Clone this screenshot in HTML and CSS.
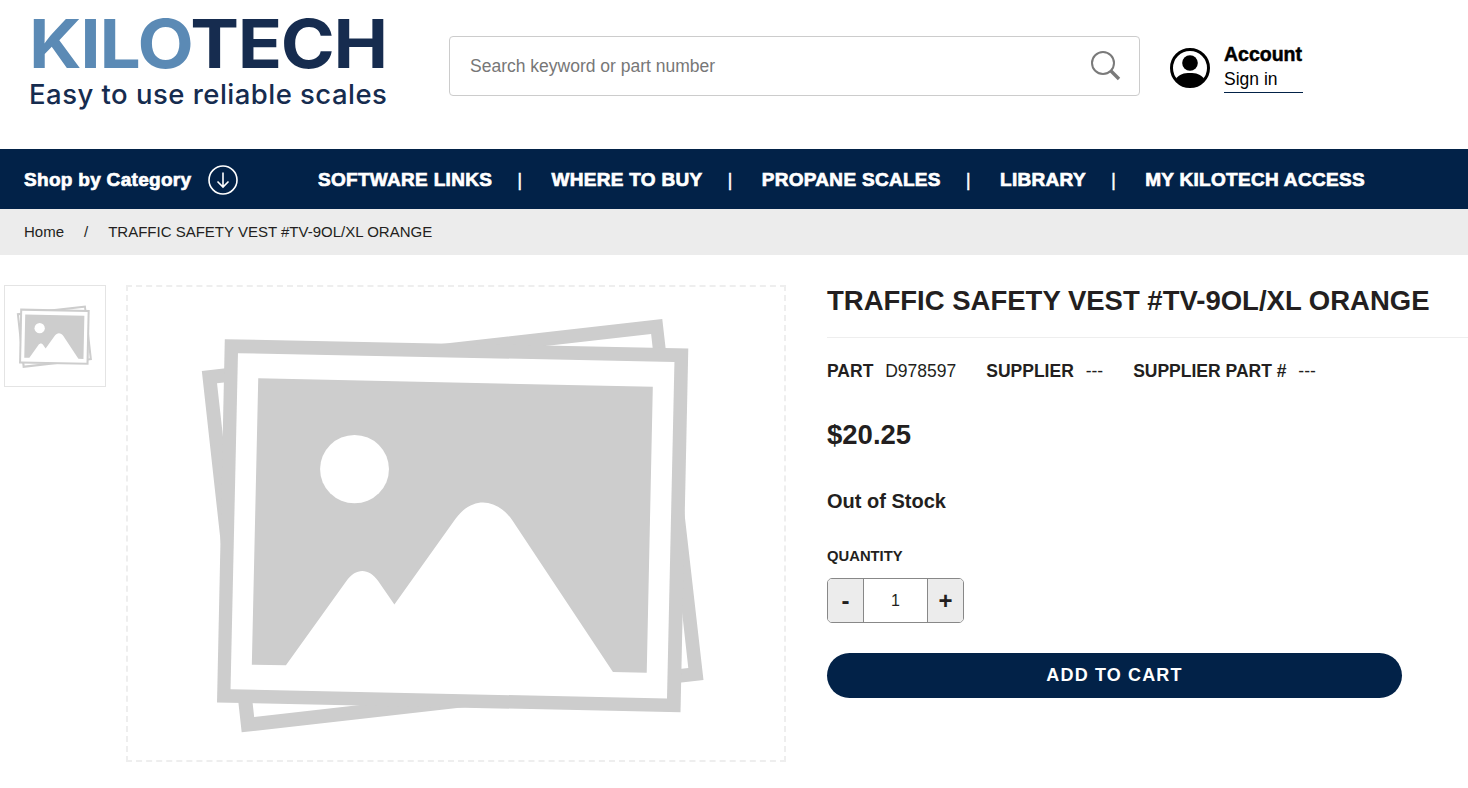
FILE: index.html
```html
<!DOCTYPE html>
<html lang="en">
<head>
    <meta charset="UTF-8">
    <meta name="viewport" content="width=device-width, initial-scale=1.0">
    <title>TRAFFIC SAFETY VEST #TV-9OL/XL ORANGE</title>
    <link rel="stylesheet" href="styles.css">
</head>
<body>

<!-- placeholder picture, used by thumbnail and main image -->
<svg class="defs" width="0" height="0" aria-hidden="true">
    <symbol id="noImage" viewBox="0 0 1560 1266" preserveAspectRatio="none">
        <path fill-rule="evenodd" fill="#cdcdcd" d="M35 185L1398 30L1520 1108L153 1264ZM80 222L190 1218L1475 1072L1365 75Z"/>
        <path fill="#cdcdcd" d="M103 90L1475 118L1452 1204L80 1175Z"/>
        <path fill="#fff" d="M142 132L1434 158L1412 1163L120 1135Z"/>
        <path fill="#cdcdcd" d="M202 207L1370 232L1352 1086L1252 1084L955 632C905 560 832 560 785 628L605 882L557 812C530 772 490 772 463 812L284 1064L183 1062Z"/>
        <circle fill="#fff" cx="487" cy="478" r="102"/>
    </symbol>
</svg>

<header class="site-header">
    <a class="logo" href="#">
        <span class="logo-name"><span class="logo-light">KILO</span>TECH</span>
        <span class="logo-tag">Easy to use reliable scales</span>
    </a>
    <form class="search">
        <input class="search-input" type="text" placeholder="Search keyword or part number">
        <svg class="search-icon" width="32" height="32" viewBox="0 0 32 32">
            <circle cx="14" cy="13" r="11" fill="none" stroke="#7a7a7a" stroke-width="2"/>
            <path d="M22 21L30 29" stroke="#7a7a7a" stroke-width="3.4"/>
        </svg>
    </form>
    <div class="account">
        <svg class="account-icon" width="40" height="40" viewBox="0 0 40 40">
            <circle cx="20" cy="20" r="18.5" fill="#fff" stroke="#000" stroke-width="3"/>
            <circle cx="20" cy="15" r="7.8"/>
            <path d="M6 31C9 26 14 25 20 25S31 26 34 31C30 36 25 38.500 20 38.500S10 36 6 31Z"/>
        </svg>
        <div class="account-text">
            <strong>Account</strong>
            <a href="#">Sign in</a>
        </div>
    </div>
</header>

<nav class="main-nav">
    <a class="shop-link" href="#">
        Shop by Category
        <svg width="30" height="30" viewBox="0 0 30 30">
            <circle cx="15" cy="15" r="14" fill="none" stroke="#fff" stroke-width="1.600"/>
            <path d="M15 7.500V22M9.500 16.500L15 22L20.500 16.500" fill="none" stroke="#fff" stroke-width="1.600"/>
        </svg>
    </a>
    <ul class="nav-links">
        <li><a href="#">SOFTWARE LINKS</a></li>
        <li class="sep">|</li>
        <li><a href="#">WHERE TO BUY</a></li>
        <li class="sep">|</li>
        <li><a href="#">PROPANE SCALES</a></li>
        <li class="sep">|</li>
        <li><a href="#">LIBRARY</a></li>
        <li class="sep">|</li>
        <li><a href="#">MY KILOTECH ACCESS</a></li>
    </ul>
</nav>

<div class="breadcrumb">
    <a href="#">Home</a>
    <span>/</span>
    <span>TRAFFIC SAFETY VEST #TV-9OL/XL ORANGE</span>
</div>

<main class="product">
    <div class="thumb">
        <svg width="79" height="64"><use href="#noImage"/></svg>
    </div>
    <div class="gallery">
        <svg width="527" height="424"><use href="#noImage"/></svg>
    </div>
    <section class="details">
        <h1 class="title">TRAFFIC SAFETY VEST #TV-9OL/XL ORANGE</h1>
        <div class="meta">
            <div><b>PART</b> D978597</div>
            <div><b>SUPPLIER</b> ---</div>
            <div><b>SUPPLIER PART #</b> ---</div>
        </div>
        <div class="price">$20.25</div>
        <div class="stock">Out of Stock</div>
        <label class="qty-label" for="qty">QUANTITY</label>
        <div class="qty">
            <button class="qty-btn" type="button">-</button>
            <input class="qty-input" id="qty" type="text" value="1">
            <button class="qty-btn" type="button">+</button>
        </div>
        <button class="add-cart" type="button">ADD TO CART</button>
    </section>
</main>

</body>
</html>
```

FILE: styles.css
```css
/* general */
body {
    margin: 0;
    font-family: "Liberation Sans", Arial, sans-serif;
    color: #231f20;
    background: #fff;
}

a {
    color: inherit;
    text-decoration: none;
}

.defs {
    display: block;
    height: 0;
}

/* header */
.site-header {
    display: flex;
    align-items: flex-start;
    height: 149px;
    box-sizing: border-box;
    padding: 36px 0 0 29px;
}

.logo {
    display: flex;
    flex-direction: column;
    width: 420px;
    margin-top: -21px;
    font-family: Inter, sans-serif;
    color: #162c4f;
}

.logo-name {
    font-size: 68px;
    font-weight: 700;
    line-height: 56px;
    letter-spacing: -1.2px;
    transform: scaleX(1.075);
    transform-origin: left;
}

.logo-light {
    color: #5b8ab5;
}

.logo-tag {
    font-size: 27.5px;
    font-weight: 500;
    line-height: 34px;
    letter-spacing: 0.47px;
    margin-top: 6px;
}

.search {
    display: flex;
    align-items: center;
    width: 691px;
    height: 60px;
    box-sizing: border-box;
    border: 1px solid #ccc;
    border-radius: 4px;
    padding: 0 18px 0 20px;
}

.search-input {
    flex: 1;
    border: none;
    outline: none;
    padding: 0;
    font-family: inherit;
    font-size: 17.5px;
    color: #333;
}

.search-input::placeholder {
    color: #777;
    opacity: 1;
}

.account {
    display: flex;
    align-items: center;
    gap: 14px;
    margin: 6px 0 0 30px;
}

.account-text {
    display: flex;
    flex-direction: column;
    width: 79px;
    color: #000;
}

.account-text strong {
    font-size: 19.5px;
    line-height: 25px;
    -webkit-text-stroke: 0.5px #000;
}

.account-text a {
    font-size: 17.5px;
    line-height: 24px;
    padding-bottom: 1px;
    border-bottom: 1px solid #022248;
}

/* navigation */
.main-nav {
    display: flex;
    align-items: center;
    height: 60px;
    padding: 2px 0 0 24px;
    box-sizing: border-box;
    background-color: #022248;
    color: #fff;
    font-size: 19px;
    font-weight: 700;
    letter-spacing: 0.3px;
    -webkit-text-stroke: 0.7px #fff;
}

.shop-link {
    display: flex;
    align-items: center;
    gap: 17px;
    width: 294px;
}

.nav-links {
    display: flex;
    align-items: center;
    gap: 25px;
    list-style: none;
    margin: 0;
    padding: 0;
}

.sep {
    margin-right: 4px;
    font-weight: 400;
    -webkit-text-stroke: 0.4px #fff;
}

/* breadcrumb */
.breadcrumb {
    display: flex;
    gap: 20px;
    align-items: center;
    height: 46px;
    box-sizing: border-box;
    padding: 0 0 2px 24px;
    background-color: #ececec;
    font-size: 15px;
}

/* product */
.product {
    display: flex;
    align-items: flex-start;
    padding: 30px 0 0 4px;
}

.thumb {
    display: flex;
    align-items: center;
    justify-content: center;
    width: 102px;
    height: 102px;
    box-sizing: border-box;
    padding-right: 2px;
    border: 1px solid #e4e4e4;
    flex-shrink: 0;
}

.gallery {
    display: flex;
    align-items: center;
    justify-content: center;
    width: 660px;
    height: 477px;
    box-sizing: border-box;
    padding: 0 5px 6px 0;
    margin-left: 20px;
    border: 2px dashed #eee;
    flex-shrink: 0;
}

.details {
    flex: 1;
    margin-left: 41px;
}

.title {
    margin: 0;
    padding-bottom: 20px;
    border-bottom: 1px solid #eee;
    font-size: 27.5px;
    line-height: 32px;
}

.meta {
    display: flex;
    gap: 30px;
    margin-top: 23px;
    font-size: 17.5px;
    line-height: 20px;
}

.meta b {
    margin-right: 7px;
}

.price {
    margin-top: 38px;
    font-size: 27.5px;
    font-weight: 700;
    line-height: 32px;
}

.stock {
    margin-top: 38px;
    font-size: 20px;
    font-weight: 700;
    line-height: 24px;
}

.qty-label {
    display: block;
    margin-top: 34px;
    font-size: 14.8px;
    font-weight: 700;
    line-height: 18px;
}

.qty {
    display: flex;
    width: 137px;
    height: 45px;
    box-sizing: border-box;
    margin-top: 13px;
    border: 1px solid #888;
    border-radius: 5px;
    overflow: hidden;
}

.qty-btn {
    width: 35px;
    flex-shrink: 0;
    padding: 0;
    border: none;
    background-color: #ececec;
    font-family: inherit;
    font-size: 24px;
    font-weight: 700;
    color: #231f20;
}

.qty-input {
    width: 65px;
    box-sizing: border-box;
    padding: 0;
    border: none;
    border-left: 1px solid #888;
    border-right: 1px solid #888;
    outline: none;
    text-align: center;
    font-family: inherit;
    font-size: 16px;
    color: #231f20;
}

.add-cart {
    display: block;
    width: 575px;
    height: 45px;
    margin-top: 30px;
    padding: 0;
    border: none;
    border-radius: 23px;
    background-color: #022248;
    color: #fff;
    font-family: inherit;
    font-size: 18px;
    font-weight: 700;
    letter-spacing: 1.15px;
}
```
